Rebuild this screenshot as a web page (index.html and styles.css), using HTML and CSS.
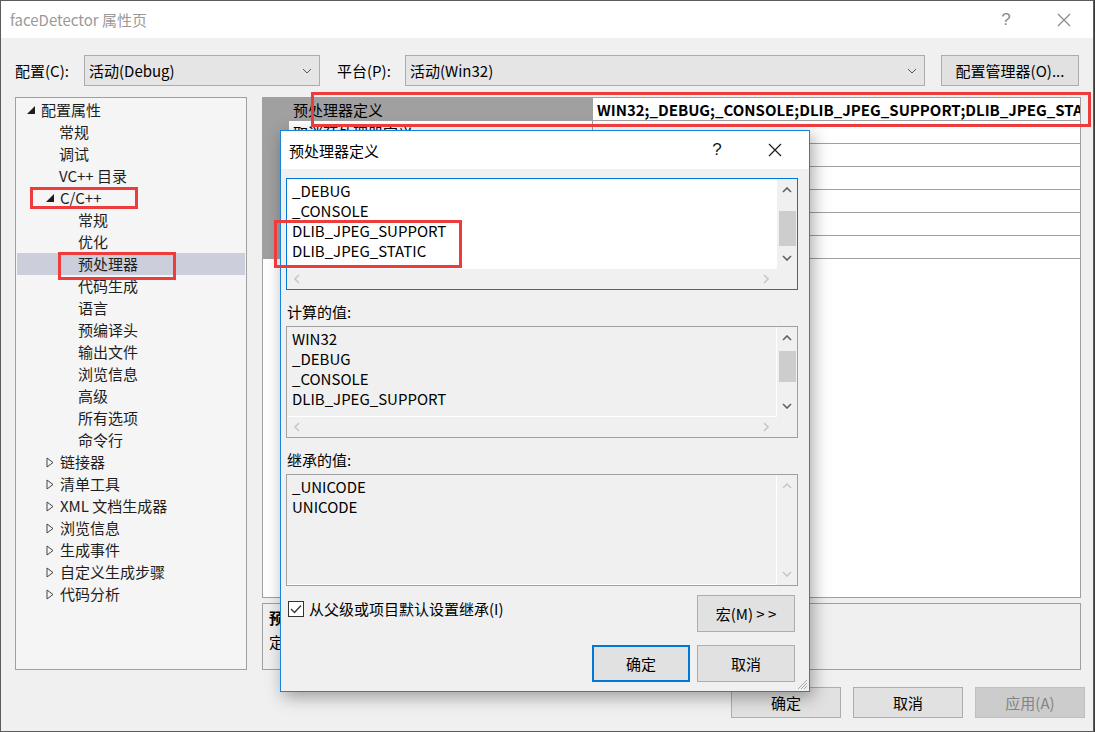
FILE: index.html
```html
<!DOCTYPE html>
<html lang="zh-CN">
<head>
  <meta charset="UTF-8" />
  <title>faceDetector 属性页</title>
  <link rel="stylesheet" href="styles.css">
</head>
<body>
  <div class="window">
    <div class="titlebar">
      <span class="title">faceDetector 属性页</span>
      <span class="tb-btn tb-help">?</span>
      <span class="tb-btn">
        <svg width="14" height="14" viewBox="0 0 14 14"><path d="M1 1L13 13M13 1L1 13" stroke="#8a8a8a" stroke-width="1.2"/></svg>
      </span>
    </div>

    <div class="config-row">
      <span class="cfg-label">配置(C):</span>
      <div class="select select-config">
        <span>活动(Debug)</span>
        <svg class="drop" viewBox="0 0 10 6"><polyline points="1,1 5,5 9,1"/></svg>
      </div>
      <span class="cfg-label cfg-label-platform">平台(P):</span>
      <div class="select select-platform">
        <span>活动(Win32)</span>
        <svg class="drop" viewBox="0 0 10 6"><polyline points="1,1 5,5 9,1"/></svg>
      </div>
      <button class="btn btn-manager">配置管理器(O)...</button>
    </div>

    <div class="main">
      <div class="tree">
        <div class="node lv0"><svg class="tri" viewBox="0 0 8 8"><polygon points="8,0 8,8 0,8"/></svg>配置属性</div>
        <div class="node lv1">常规</div>
        <div class="node lv1">调试</div>
        <div class="node lv1">VC++ 目录</div>
        <div class="node lv1 has-tri"><svg class="tri" viewBox="0 0 8 8"><polygon points="8,0 8,8 0,8"/></svg>C/C++</div>
        <div class="node lv2">常规</div>
        <div class="node lv2">优化</div>
        <div class="node lv2 selected">预处理器</div>
        <div class="node lv2">代码生成</div>
        <div class="node lv2">语言</div>
        <div class="node lv2">预编译头</div>
        <div class="node lv2">输出文件</div>
        <div class="node lv2">浏览信息</div>
        <div class="node lv2">高级</div>
        <div class="node lv2">所有选项</div>
        <div class="node lv2">命令行</div>
        <div class="node lv1 has-tri"><svg class="tri-open" viewBox="0 0 8 11"><polygon points="1,1 7,5.5 1,10"/></svg>链接器</div>
        <div class="node lv1 has-tri"><svg class="tri-open" viewBox="0 0 8 11"><polygon points="1,1 7,5.5 1,10"/></svg>清单工具</div>
        <div class="node lv1 has-tri"><svg class="tri-open" viewBox="0 0 8 11"><polygon points="1,1 7,5.5 1,10"/></svg>XML 文档生成器</div>
        <div class="node lv1 has-tri"><svg class="tri-open" viewBox="0 0 8 11"><polygon points="1,1 7,5.5 1,10"/></svg>浏览信息</div>
        <div class="node lv1 has-tri"><svg class="tri-open" viewBox="0 0 8 11"><polygon points="1,1 7,5.5 1,10"/></svg>生成事件</div>
        <div class="node lv1 has-tri"><svg class="tri-open" viewBox="0 0 8 11"><polygon points="1,1 7,5.5 1,10"/></svg>自定义生成步骤</div>
        <div class="node lv1 has-tri"><svg class="tri-open" viewBox="0 0 8 11"><polygon points="1,1 7,5.5 1,10"/></svg>代码分析</div>
      </div>

      <div class="right">
        <div class="grid">
          <div class="row row-selected">
            <div class="margin"></div>
            <div class="name">预处理器定义</div>
            <div class="value value-bold">WIN32;_DEBUG;_CONSOLE;DLIB_JPEG_SUPPORT;DLIB_JPEG_STATIC;%(PreprocessorDefinitions)</div>
          </div>
          <div class="row"><div class="margin"></div><div class="name">取消预处理器定义</div><div class="value"></div></div>
          <div class="row"><div class="margin"></div><div class="name">取消所有预处理器定义</div><div class="value">否</div></div>
          <div class="row"><div class="margin"></div><div class="name">忽略标准包含路径</div><div class="value">否</div></div>
          <div class="row"><div class="margin"></div><div class="name">预处理到文件</div><div class="value">否</div></div>
          <div class="row"><div class="margin"></div><div class="name">预处理取消显示行号</div><div class="value">否</div></div>
          <div class="row"><div class="margin"></div><div class="name">保留注释</div><div class="value">否</div></div>
        </div>
        <div class="desc">
          <div class="desc-title">预处理器定义</div>
          <div>定义源文件的预处理符号。</div>
        </div>
      </div>
    </div>

    <div class="footer">
      <button class="btn btn-footer">确定</button>
      <button class="btn btn-footer">取消</button>
      <button class="btn btn-footer" disabled>应用(A)</button>
    </div>

    <!-- modal editor dialog -->
    <div class="dialog">
      <div class="dlg-titlebar">
        <span class="dlg-title">预处理器定义</span>
        <span class="tb-btn dlg-help">?</span>
        <span class="tb-btn">
          <svg width="14" height="14" viewBox="0 0 14 14"><path d="M1 1L13 13M13 1L1 13" stroke="#1a1a1a" stroke-width="1.2"/></svg>
        </span>
      </div>
      <div class="dlg-body">
        <div class="editbox editbox-active">
          <div class="lines lines-white">
            <div>_DEBUG</div>
            <div>_CONSOLE</div>
            <div>DLIB_JPEG_SUPPORT</div>
            <div>DLIB_JPEG_STATIC</div>
          </div>
          <div class="vscroll">
            <span class="sb-btn"><svg class="chev" viewBox="0 0 10 6"><polyline points="1,5 5,1 9,5"/></svg></span>
            <span class="thumb thumb-a"></span>
            <span class="sb-btn sb-down"><svg class="chev" viewBox="0 0 10 6"><polyline points="1,1 5,5 9,1"/></svg></span>
          </div>
          <div class="hscroll">
            <svg class="chev-h off" viewBox="0 0 6 10"><polyline points="5,1 1,5 5,9"/></svg>
            <svg class="chev-h off" viewBox="0 0 6 10"><polyline points="1,1 5,5 1,9"/></svg>
          </div>
          <div class="corner"></div>
        </div>

        <div class="field-label">计算的值:</div>
        <div class="editbox">
          <div class="lines">
            <div>WIN32</div>
            <div>_DEBUG</div>
            <div>_CONSOLE</div>
            <div>DLIB_JPEG_SUPPORT</div>
          </div>
          <div class="vscroll">
            <span class="sb-btn"><svg class="chev" viewBox="0 0 10 6"><polyline points="1,5 5,1 9,5"/></svg></span>
            <span class="thumb thumb-b"></span>
            <span class="sb-btn sb-down"><svg class="chev" viewBox="0 0 10 6"><polyline points="1,1 5,5 9,1"/></svg></span>
          </div>
          <div class="hscroll">
            <svg class="chev-h off" viewBox="0 0 6 10"><polyline points="5,1 1,5 5,9"/></svg>
            <svg class="chev-h off" viewBox="0 0 6 10"><polyline points="1,1 5,5 1,9"/></svg>
          </div>
          <div class="corner"></div>
        </div>

        <div class="field-label">继承的值:</div>
        <div class="editbox editbox-noh">
          <div class="lines">
            <div>_UNICODE</div>
            <div>UNICODE</div>
          </div>
          <div class="vscroll">
            <span class="sb-btn"><svg class="chev off" viewBox="0 0 10 6"><polyline points="1,5 5,1 9,5"/></svg></span>
            <span class="sb-btn sb-down"><svg class="chev off" viewBox="0 0 10 6"><polyline points="1,1 5,5 9,1"/></svg></span>
          </div>
        </div>

        <div class="inherit-row">
          <label class="check">
            <svg width="16" height="16" viewBox="0 0 16 16"><rect x="0.5" y="0.5" width="15" height="15" fill="#fff" stroke="#333"/><polyline points="3,8 6.5,11.5 13,4.5" fill="none" stroke="#333" stroke-width="1.3"/></svg>
            <span>从父级或项目默认设置继承(I)</span>
          </label>
          <button class="btn btn-dlg">宏(M) &gt; &gt;</button>
        </div>

        <div class="dlg-actions">
          <button class="btn btn-dlg btn-default">确定</button>
          <button class="btn btn-dlg">取消</button>
        </div>
      </div>
      <svg class="grip" width="10" height="10" viewBox="0 0 10 10"><path d="M9 3L3 9M9 6L6 9M9 0L0 9" stroke="#a8a8a8" stroke-width="1"/></svg>
    </div>

    <!-- red annotation frames -->
    <div class="mark mark-value"></div>
    <div class="mark mark-cpp"></div>
    <div class="mark mark-pre"></div>
    <div class="mark mark-dlib"></div>
  </div>
</body>
</html>
```

FILE: styles.css
```css
* {
  box-sizing: border-box;
}
body {
  margin: 0;
  font-family: "Noto Sans CJK SC", "Noto Sans", sans-serif;
  font-size: 15px;
  color: #000;
  background: #3a3a3a;
}
.window {
  position: relative;
  width: 1094px;
  height: 732px;
  background: #f0f0f0;
  border: 1px solid #5c5c5c;
  display: flex;
  flex-direction: column;
  overflow: hidden;
}
.titlebar {
  height: 37px;
  background: #fff;
  display: flex;
  align-items: center;
  padding-left: 9px;
  flex-shrink: 0;
}
.title {
  color: #9a9a9a;
  flex: 1;
}
.tb-btn {
  width: 58px;
  height: 37px;
  display: flex;
  align-items: center;
  justify-content: center;
}
.tb-help {
  color: #8a8a8a;
  font-family: "Liberation Sans", sans-serif;
  font-size: 17px;
}

/* config row */
.config-row {
  display: flex;
  align-items: center;
  height: 31px;
  margin-top: 17px;
  padding-left: 14px;
  flex-shrink: 0;
}
.cfg-label {
  width: 69px;
}
.cfg-label-platform {
  width: 68px;
  margin-left: 17px;
}
.select {
  height: 31px;
  background: #e5e5e5;
  border: 1px solid #acacac;
  display: flex;
  align-items: center;
  justify-content: space-between;
  padding: 0 7px 0 4px;
}
.select-config {
  width: 236px;
}
.select-platform {
  width: 520px;
}
.drop {
  width: 10px;
  height: 6px;
  fill: none;
  stroke: #555;
  stroke-width: 1;
}
.btn {
  font-family: inherit;
  font-size: 15px;
  color: #000;
  background: #e1e1e1;
  border: 1px solid #adadad;
  padding: 0;
}
.btn-manager {
  width: 138px;
  height: 31px;
  margin-left: 16px;
}

/* main area */
.main {
  display: flex;
  gap: 15px;
  margin-top: 11px;
  padding-left: 14px;
  height: 573px;
  flex-shrink: 0;
}
.tree {
  width: 232px;
  background: #f5f5f5;
  border: 1px solid #a0a0a0;
  padding: 1px 1px 0;
}
.node {
  height: 22px;
  line-height: 22px;
  color: #1e1e1e;
  white-space: nowrap;
  display: flex;
  align-items: center;
}
.node.lv0 {
  padding-left: 10px;
}
.node.lv1 {
  padding-left: 42px;
}
.node.lv1.has-tri {
  padding-left: 29px;
}
.node.lv2 {
  padding-left: 61px;
}
.node.selected {
  background: #cccedb;
}
.tri {
  width: 8px;
  height: 8px;
  fill: #1e1e1e;
  margin-right: 6px;
}
.tri-open {
  width: 8px;
  height: 11px;
  fill: none;
  stroke: #444;
  stroke-width: 1;
  margin-right: 6px;
}

.right {
  width: 819px;
  display: flex;
  flex-direction: column;
  gap: 5px;
}
.grid {
  height: 501px;
  background: #fff;
  border: 1px solid #a0a0a0;
}
.row {
  display: grid;
  grid-template-columns: 26px 304px 1fr;
  height: 23px;
}
.margin {
  background: #a0a0a0;
}
.name,
.value {
  border-bottom: 1px solid #a0a0a0;
  line-height: 23px;
  padding-left: 4px;
  white-space: nowrap;
  overflow: hidden;
}
.name {
  border-right: 1px solid #a0a0a0;
}
.row-selected .name {
  background: #a0a0a0;
}
.value-bold {
  font-weight: bold;
}
.desc {
  height: 67px;
  background: #f0f0f0;
  border: 1px solid #a0a0a0;
  padding: 2px 6px;
  line-height: 24px;
}
.desc-title {
  font-weight: bold;
}

.footer {
  display: flex;
  justify-content: flex-end;
  gap: 12px;
  margin-top: 17px;
  padding-right: 8px;
}
.btn-footer {
  width: 110px;
  height: 31px;
}
.btn-footer:disabled {
  background: #cccccc;
  border-color: #bfbfbf;
  color: #838383;
}

/* dialog */
.dialog {
  position: absolute;
  left: 279px;
  top: 129px;
  width: 530px;
  height: 562px;
  background: #f0f0f0;
  border: 1px solid #1883d7;
  box-shadow: 3px 5px 16px rgba(0, 0, 0, 0.35);
}
.dlg-titlebar {
  height: 38px;
  background: #fff;
  display: flex;
  align-items: center;
  padding: 0 5px 0 8px;
}
.dlg-title {
  flex: 1;
}
.dlg-help {
  color: #1a1a1a;
  font-family: "Liberation Sans", sans-serif;
  font-size: 17px;
}
.dlg-body {
  padding: 9px 11px 0 5px;
}
.editbox {
  height: 112px;
  border: 1px solid #a0a0a0;
  display: grid;
  grid-template-columns: 1fr 20px;
  grid-template-rows: 1fr 20px;
}
.editbox-active {
  border-color: #0078d7;
}
.editbox-noh {
  grid-template-rows: 1fr;
}
.lines {
  padding: 2px 5px;
  line-height: 20px;
  overflow: hidden;
  border-right: 1px solid #fff;
  border-bottom: 1px solid #fff;
}
.lines-white {
  background: #fff;
}
.vscroll {
  display: flex;
  flex-direction: column;
  align-items: center;
}
.sb-btn {
  height: 22px;
  display: flex;
  align-items: center;
  justify-content: center;
}
.sb-down {
  margin-top: auto;
}
.thumb {
  width: 17px;
  background: #cdcdcd;
}
.thumb-a {
  height: 35px;
  margin-top: 10px;
}
.thumb-b {
  height: 31px;
  margin-top: 2px;
}
.chev {
  width: 10px;
  height: 6px;
  fill: none;
  stroke: #606060;
  stroke-width: 1.6;
}
.chev.off,
.chev-h.off {
  stroke: #c8c8c8;
}
.hscroll {
  display: flex;
  align-items: center;
  justify-content: space-between;
  padding: 0 8px 0 7px;
}
.chev-h {
  width: 6px;
  height: 10px;
  fill: none;
  stroke-width: 1.6;
}
.field-label {
  margin-top: 12px;
  margin-bottom: 4px;
  line-height: 20px;
  padding-left: 1px;
}
.inherit-row {
  display: flex;
  align-items: flex-start;
  justify-content: space-between;
  margin-top: 9px;
  padding-right: 3px;
}
.check {
  display: flex;
  align-items: center;
  gap: 5px;
  margin: 3px 0 0 2px;
}
.check svg {
  display: block;
}
.btn-dlg {
  width: 98px;
  height: 37px;
}
.dlg-actions {
  display: flex;
  justify-content: flex-end;
  gap: 7px;
  margin-top: 13px;
  padding-right: 3px;
}
.btn-default {
  border: 2px solid #0078d7;
}
.grip {
  position: absolute;
  right: 1px;
  bottom: 1px;
}

/* red annotation frames */
.mark {
  position: absolute;
  border: 3px solid #ee3b3b;
}
.mark-value {
  left: 310px;
  top: 91px;
  width: 780px;
  height: 35px;
}
.mark-cpp {
  left: 29px;
  top: 186px;
  width: 108px;
  height: 22px;
}
.mark-pre {
  left: 57px;
  top: 251px;
  width: 118px;
  height: 28px;
}
.mark-dlib {
  left: 273px;
  top: 219px;
  width: 188px;
  height: 48px;
}
```
